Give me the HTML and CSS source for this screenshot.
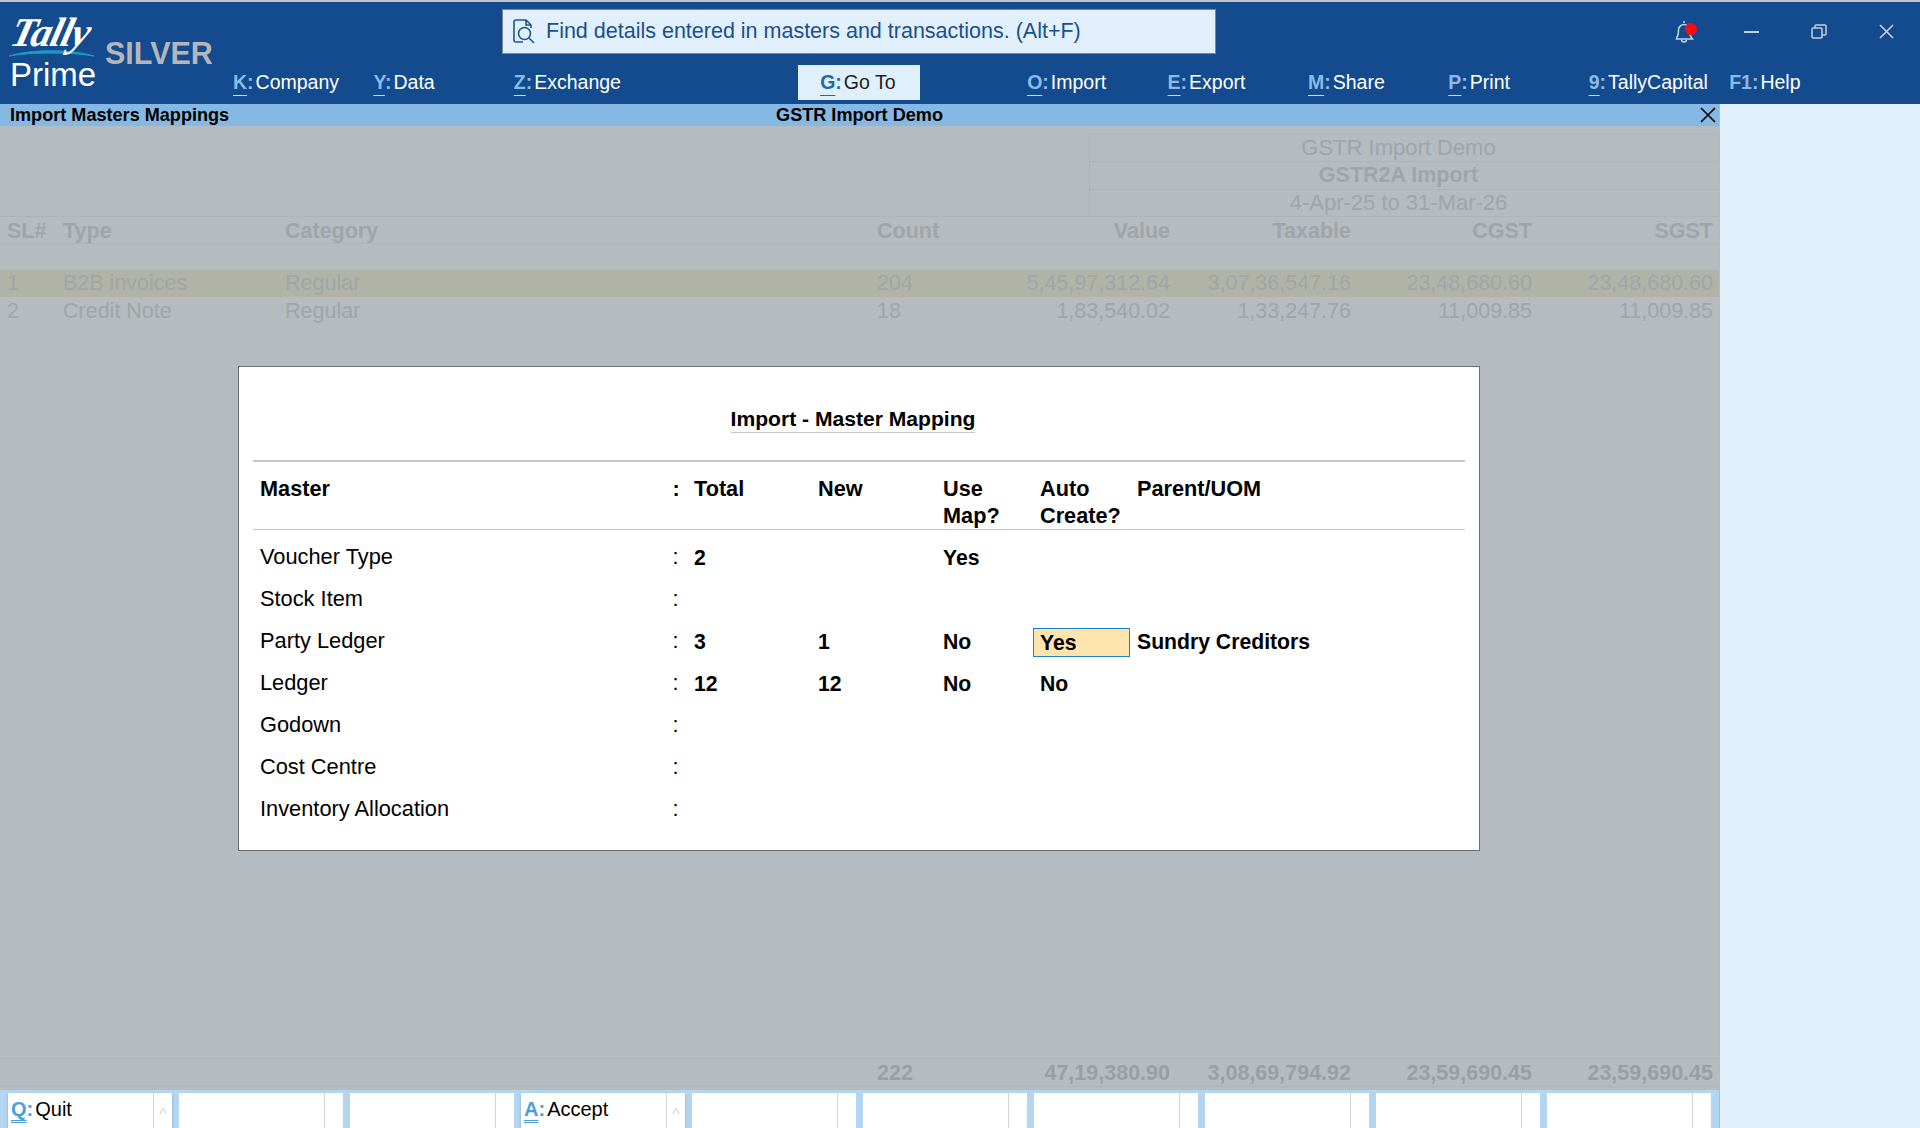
FILE: index.html
```html
<!DOCTYPE html>
<html lang="en">
<head>
  <meta charset="UTF-8">
  <meta name="viewport" content="width=device-width, initial-scale=1.0">
  <title>Import Masters Mappings</title>
  <link rel="stylesheet" href="styles.css">
</head>
<body>
  <header class="header">
    <div class="brand">
      <div class="logo">
        <div class="logo-tally">Tally</div>
        <svg class="logo-swoosh" width="86" height="8" viewBox="0 0 86 8"><path d="M0 7 C22 0 62 0 85 7 C62 3 22 3 0 7 Z" fill="#1b9cc4" stroke="#1b9cc4"/></svg>
        <div class="logo-prime">Prime</div>
      </div>
      <div class="edition">SILVER</div>
    </div>
    <div class="header-right">
      <div class="top-row">
        <div class="search">
          <svg class="search-icon" width="24" height="25" viewBox="0 0 24 25" fill="none" stroke="#1c568f" stroke-width="1.6">
            <path d="M10 23H3a2 2 0 0 1-2-2V3a2 2 0 0 1 2-2h10l5 5v3"/>
            <path d="M13 1v5h5"/>
            <circle cx="11.5" cy="14.5" r="6"/>
            <path d="M16 19l5 5"/>
          </svg>
          <span>Find details entered in masters and transactions. (Alt+F)</span>
        </div>
        <div class="win-controls">
          <div class="bell">
            <svg width="20" height="24" viewBox="0 0 20 24" fill="none" stroke="#c3d0e2" stroke-width="1.5">
              <path d="M10 1v2M3 17c1.500-2 1.500-4 1.500-7a5.500 5.500 0 0 1 11 0c0 3 0 5 1.500 7l1.500 2h-16z"/>
              <path d="M7.500 19.500a2.500 2.500 0 0 0 5 0"/>
            </svg>
            <i class="bell-dot"></i>
          </div>
          <svg class="win-min" width="16" height="2" viewBox="0 0 16 2"><path d="M0 1h15" stroke="#c3d0e2" stroke-width="2"/></svg>
          <svg class="win-restore" width="16" height="15" viewBox="0 0 16 15" fill="none" stroke="#c3d0e2" stroke-width="1.5"><rect x="1" y="4" width="10" height="10" rx="1"/><path d="M4 4V2a1 1 0 0 1 1-1h9a1 1 0 0 1 1 1v8a1 1 0 0 1-1 1h-3"/></svg>
          <svg class="win-close" width="15" height="15" viewBox="0 0 15 15"><path d="M1 1l13 13M14 1L1 14" stroke="#c3d0e2" stroke-width="1.7"/></svg>
        </div>
      </div>
      <nav class="menu">
        <div class="menu-item"><u>K</u><b>:</b>Company</div>
        <div class="menu-item"><u>Y</u><b>:</b>Data</div>
        <div class="menu-item"><u>Z</u><b>:</b>Exchange</div>
        <div class="menu-item goto"><u>G</u><b>:</b>Go To</div>
        <div class="menu-item after-goto"><u>O</u><b>:</b>Import</div>
        <div class="menu-item"><u>E</u><b>:</b>Export</div>
        <div class="menu-item"><u>M</u><b>:</b>Share</div>
        <div class="menu-item"><u>P</u><b>:</b>Print</div>
        <div class="menu-item"><u>9</u><b>:</b>TallyCapital</div>
        <div class="menu-item"><b class="plain">F1:</b>Help</div>
      </nav>
    </div>
  </header>

  <div class="screen">
    <div class="main">
      <div class="title-bar">
        <div class="title-left">Import Masters Mappings</div>
        <div class="title-mid">GSTR Import Demo</div>
        <div class="title-right">
          <svg width="16" height="16" viewBox="0 0 16 16"><path d="M1 1l14 14M15 1L1 15" stroke="#000" stroke-width="1.6"/></svg>
        </div>
      </div>

      <div class="content">
        <div class="report-head">
          <div class="report-line">GSTR Import Demo</div>
          <div class="report-line strong">GSTR2A Import</div>
          <div class="report-line">4-Apr-25 to 31-Mar-26</div>
        </div>

        <div class="report-row columns">
          <div>SL#</div><div>Type</div><div>Category</div><div>Count</div>
          <div class="num">Value</div><div class="num">Taxable</div><div class="num">CGST</div><div class="num">SGST</div>
        </div>

        <div class="report-row selected">
          <div>1</div><div>B2B invoices</div><div>Regular</div><div>204</div>
          <div class="num">5,45,97,312.64</div><div class="num">3,07,36,547.16</div><div class="num">23,48,680.60</div><div class="num">23,48,680.60</div>
        </div>
        <div class="report-row second">
          <div>2</div><div>Credit Note</div><div>Regular</div><div>18</div>
          <div class="num">1,83,540.02</div><div class="num">1,33,247.76</div><div class="num">11,009.85</div><div class="num">11,009.85</div>
        </div>

        <div class="report-row totals">
          <div></div><div></div><div></div><div>222</div>
          <div class="num">47,19,380.90</div><div class="num">3,08,69,794.92</div><div class="num">23,59,690.45</div><div class="num">23,59,690.45</div>
        </div>

        <div class="dialog">
          <div class="dialog-title"><span>Import - Master Mapping</span></div>
          <div class="map-row map-head">
            <div>Master</div><div>:</div><div>Total</div><div>New</div><div>Use<br>Map?</div><div>Auto<br>Create?</div><div>Parent/UOM</div>
          </div>
          <div class="map-body">
            <div class="map-row">
              <div>Voucher Type</div><div>:</div><div class="val">2</div><div></div><div class="val">Yes</div><div></div><div></div>
            </div>
            <div class="map-row">
              <div>Stock Item</div><div>:</div><div></div><div></div><div></div><div></div><div></div>
            </div>
            <div class="map-row">
              <div>Party Ledger</div><div>:</div><div class="val">3</div><div class="val">1</div><div class="val">No</div><div class="val"><span class="field-active">Yes</span></div><div class="val">Sundry Creditors</div>
            </div>
            <div class="map-row">
              <div>Ledger</div><div>:</div><div class="val">12</div><div class="val">12</div><div class="val">No</div><div class="val">No</div><div></div>
            </div>
            <div class="map-row">
              <div>Godown</div><div>:</div><div></div><div></div><div></div><div></div><div></div>
            </div>
            <div class="map-row">
              <div>Cost Centre</div><div>:</div><div></div><div></div><div></div><div></div><div></div>
            </div>
            <div class="map-row">
              <div>Inventory Allocation</div><div>:</div><div></div><div></div><div></div><div></div><div></div>
            </div>
          </div>
        </div>
      </div>

      <footer class="button-bar">
        <div class="fn-button shadow"><div class="fn-label"><u>Q</u><b>:</b>Quit</div><div class="fn-side">^</div></div>
        <div class="fn-button"><div class="fn-label"></div><div class="fn-side"></div></div>
        <div class="fn-button"><div class="fn-label"></div><div class="fn-side"></div></div>
        <div class="fn-button shadow"><div class="fn-label"><u>A</u><b>:</b>Accept</div><div class="fn-side">^</div></div>
        <div class="fn-button"><div class="fn-label"></div><div class="fn-side"></div></div>
        <div class="fn-button"><div class="fn-label"></div><div class="fn-side"></div></div>
        <div class="fn-button"><div class="fn-label"></div><div class="fn-side"></div></div>
        <div class="fn-button"><div class="fn-label"></div><div class="fn-side"></div></div>
        <div class="fn-button"><div class="fn-label"></div><div class="fn-side"></div></div>
        <div class="fn-button"><div class="fn-label"></div><div class="fn-side"></div></div>
      </footer>
    </div>
    <aside class="side-panel"></aside>
  </div>
</body>
</html>
```

FILE: styles.css
```css
* {
  box-sizing: border-box;
}
body {
  margin: 0;
  height: 1128px;
  overflow: hidden;
  font-family: "Liberation Sans", Arial, sans-serif;
  font-size: 21.5px;
  background-color: #dff0fc;
  color: #000;
}

/* top blue header */
.header {
  display: flex;
  height: 104px;
  margin-top: 0;
  border-top: 2px solid #c3c3c3;
  background-color: #134b8e;
}
.brand {
  display: flex;
  width: 233px;
  flex: none;
  padding-left: 9px;
}
.logo {
  width: 96px;
  flex: none;
  padding-top: 14px;
}
.logo-tally {
  height: 32px;
  padding-left: 3px;
  font-family: "Liberation Serif", serif;
  font-size: 41px;
  font-weight: bold;
  font-style: italic;
  line-height: 32px;
  color: #fff;
  letter-spacing: -1px;
  transform: skewX(-14deg);
}
.logo-swoosh {
  display: block;
  margin-top: 1px;
}
.logo-prime {
  margin-top: 1px;
  margin-left: 1px;
  font-size: 33px;
  line-height: 33px;
  color: #fff;
}
.edition {
  margin-top: 34px;
  font-size: 30.500px;
  font-weight: bold;
  line-height: 34px;
  color: #b5b6ba;
}
.header-right {
  flex: 1;
  min-width: 0;
}
.top-row {
  display: flex;
  height: 63px;
  padding-top: 7px;
  padding-left: 269px;
}
.search {
  display: flex;
  align-items: center;
  width: 714px;
  height: 45px;
  padding-left: 10px;
  border: 1px solid #7b8794;
  background-color: #e1f0fc;
  color: #1a4f90;
  font-size: 21.500px;
}
.search-icon {
  margin-right: 9px;
}
.win-controls {
  display: flex;
  align-items: center;
  height: 45px;
}
.bell {
  position: relative;
  width: 20px;
  height: 24px;
  margin-left: 458px;
}
.bell-dot {
  position: absolute;
  top: 3px;
  left: 11px;
  width: 12px;
  height: 12px;
  border-radius: 50%;
  background-color: #f80d12;
}
.win-min {
  margin-left: 50px;
}
.win-restore {
  margin-left: 51px;
}
.win-close {
  margin-left: 52px;
}
.menu {
  display: flex;
  height: 35px;
  font-size: 19.5px;
  line-height: 35px;
  color: #fff;
}
.menu-item {
  width: 140.400px;
  flex: none;
  white-space: nowrap;
}
.menu-item u,
.menu-item b {
  font-weight: bold;
  color: #8abbe7;
}
.menu-item b {
  margin-right: 2px;
}
.menu-item u {
  text-decoration-thickness: 1px;
  text-underline-offset: 6px;
  text-decoration-color: #c5dcf2;
}
.goto {
  width: 122px;
  margin-left: 144px;
  padding-left: 22px;
  background-color: #dff0fc;
  color: #1d1d1d;
}
.menu-item.goto u,
.menu-item.goto b {
  color: #2566ab;
  text-decoration-color: #2566ab;
}
.after-goto {
  margin-left: 107px;
}

/* everything under the header */
.screen {
  display: flex;
  height: 1024px;
}
.main {
  display: flex;
  flex-direction: column;
  width: 1720px;
  flex: none;
  border-right: 1px solid #8ec4ec;
  background-color: #b6bbbf;
}
.side-panel {
  flex: 1;
}
.title-bar {
  display: grid;
  grid-template-columns: 1fr auto 1fr;
  align-items: center;
  height: 22px;
  background-color: #85b9e3;
  font-size: 18.100px;
  font-weight: bold;
}
.title-left {
  padding-left: 10px;
}
.title-right {
  display: flex;
  justify-content: flex-end;
  padding-right: 3px;
}

/* dimmed report behind the dialog */
.content {
  position: relative;
  display: flex;
  flex-direction: column;
  flex: 1;
  padding-bottom: 3px;
  color: #a0a5a9;
}
.report-head {
  width: 630px;
  margin: 8px 0 0 auto;
  border-left: 1px solid #aeb3b7;
}
.report-line {
  height: 27.300px;
  padding-right: 12px;
  border-top: 1px solid #aeb3b7;
  text-align: center;
  font-size: 22px;
  line-height: 26px;
}
.strong {
  font-size: 21.500px;
  font-weight: bold;
}
.report-row {
  display: grid;
  grid-template-columns: 56px 222px 592px 130px 163px 181px 181px 181px;
  align-items: center;
  height: 27px;
  padding: 0 7px;
}
.num {
  text-align: right;
}
.columns {
  height: 28px;
  padding-top: 2px;
  border-top: 1px solid #aeb3b7;
  border-bottom: 1px solid #aeb3b7;
  font-weight: bold;
}
.selected {
  margin-top: 26px;
  padding-top: 1px;
  background-color: #b1b3a7;
}
.second {
  margin-top: 1px;
  padding-top: 1px;
}
.totals {
  height: 29px;
  margin-top: auto;
  padding-top: 2px;
  border-top: 1px solid #aeb3b7;
  border-bottom: 1px solid #aeb3b7;
  font-weight: bold;
  color: #9b9fa3;
}

/* the Import - Master Mapping popup */
.dialog {
  position: absolute;
  top: 240px;
  left: 238px;
  width: 1242px;
  height: 485px;
  padding: 38px 14px 0;
  border: 1px solid #6b7075;
  background-color: #fff;
  color: #000;
}
.dialog-title {
  display: flex;
  justify-content: center;
  padding-right: 12px;
  margin-bottom: 27px;
  font-size: 21.100px;
  font-weight: bold;
  line-height: 27px;
}
.dialog-title span {
  border-bottom: 1px solid #c8c8c8;
}
.map-row {
  display: grid;
  grid-template-columns: 412.500px 21.500px 124px 125px 97px 97px 1fr;
  align-items: center;
  height: 42px;
  padding-left: 7px;
  font-size: 21.800px;
}
.map-head {
  align-items: start;
  height: 70px;
  padding-top: 13px;
  border-top: 2px solid #c8c8c8;
  border-bottom: 1px solid #c8c8c8;
  font-size: 21.700px;
  font-weight: bold;
  line-height: 27px;
}
.map-body {
  padding-top: 6px;
}
.val {
  position: relative;
  top: 1px;
  font-size: 21.200px;
  font-weight: bold;
}
.field-active {
  display: block;
  width: 97px;
  height: 29px;
  margin-left: -7px;
  padding-left: 6px;
  border: 1px solid #1d86c0;
  background-color: #fde4ac;
  line-height: 27px;
}

/* function buttons along the bottom */
.button-bar {
  display: grid;
  grid-template-columns: repeat(10, 164px);
  gap: 7px;
  height: 38px;
  padding: 3px 0 3px 8px;
  background-color: #b3d5f0;
}
.fn-button {
  display: flex;
  background-color: #fff;
}
.shadow {
  box-shadow: 0 2px 3px rgba(0, 0, 0, 0.18);
}
.fn-label {
  flex: 1;
  padding-left: 3px;
  font-size: 20px;
  line-height: 32px;
  white-space: nowrap;
}
.fn-label u,
.fn-label b {
  font-weight: bold;
  color: #4a9fdc;
}
.fn-label b {
  margin-right: 2px;
}
.fn-label u {
  text-decoration-style: double;
  text-decoration-thickness: 1px;
  text-underline-offset: 4px;
}
.fn-side {
  width: 19px;
  flex: none;
  overflow: hidden;
  border-left: 1px solid #d5d5d5;
  text-align: center;
  font-size: 16px;
  line-height: 44px;
  color: #d8d8d8;
}
```
